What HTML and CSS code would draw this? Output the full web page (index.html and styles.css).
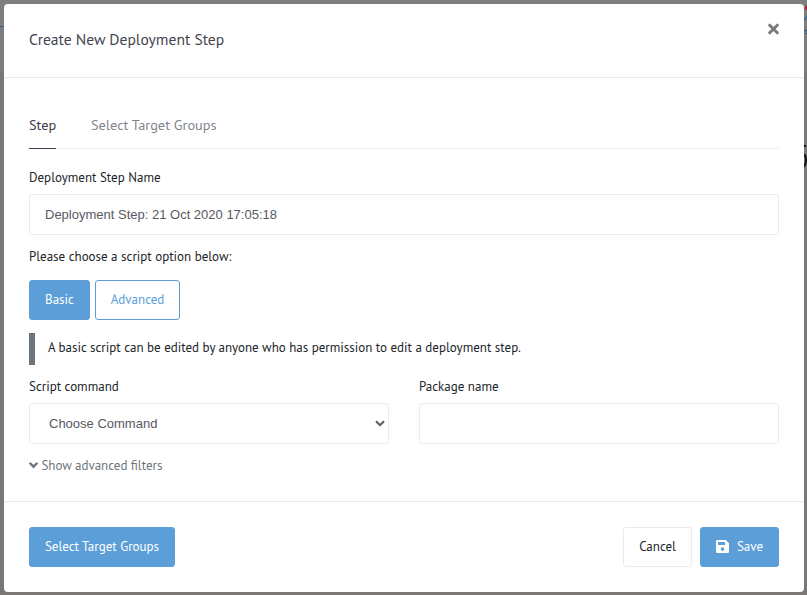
FILE: index.html
```html
<!DOCTYPE html>
<html lang="en">
<head>
<meta charset="utf-8">
<title>Create New Deployment Step</title>
<link rel="stylesheet" href="styles.css">
</head>
<body>
<svg class="backdrop" width="807" height="595" viewBox="0 0 807 595" aria-hidden="true">
  <path d="M0 71h807v524H0z" fill="#797877"/>
  <path d="M0 26.5h5" stroke="#315e91"/>
  <circle cx="807" cy="8" r="2.3" fill="#b51f42"/>
  <path d="M803 20q2 0 4-4M803 30.500h4M805 33.500h2" fill="none" stroke="#2e6590" stroke-width="1.300"/>
  <path d="M804 146h2M803 154q3 1 3 6t-3 7" fill="none" stroke="#111" stroke-width="2"/>
</svg>
<main class="modal">
  <header class="modal-header">
    <h1 class="title"><span>Create New Deployment Step</span></h1>
    <button class="close" type="button" aria-label="Close">
      <svg width="11" height="12" viewBox="0 0 11 12"><path d="M1.700 2.200l7.600 7.600M9.300 2.200l-7.600 7.600" stroke="#7b7b7b" stroke-width="3" stroke-linecap="round"/></svg>
    </button>
  </header>
  <section class="modal-body">
    <nav class="tabs">
      <a class="tab active">Step</a>
      <a class="tab groups">Select Target Groups</a>
    </nav>
    <label class="label name-label">Deployment Step Name</label>
    <div class="field">Deployment Step: 21 Oct 2020 17:05:18</div>
    <p class="label prompt">Please choose a script option below:</p>
    <div class="options">
      <button class="btn primary basic" type="button">Basic</button>
      <button class="btn outline" type="button">Advanced</button>
    </div>
    <div class="callout"><span>A basic script can be edited by anyone who has permission to edit a deployment step.</span></div>
    <div class="columns">
      <div>
        <label class="label command-label">Script command</label>
        <div class="field select">Choose Command
          <svg width="10" height="7" viewBox="0 0 10 7"><path d="M1 1.200l4 4 4-4" fill="none" stroke="#555762" stroke-width="2"/></svg>
        </div>
      </div>
      <div>
        <label class="label package-label">Package name</label>
        <div class="field"></div>
      </div>
    </div>
    <a class="filters">
      <svg width="9" height="7" viewBox="0 0 9 7"><path d="M1.300 1.500l3.200 3.200 3.200-3.200" fill="none" stroke="#6c757d" stroke-width="2.400" stroke-linecap="round"/></svg>
      <span>Show advanced filters</span>
    </a>
  </section>
  <footer class="modal-footer">
    <button class="btn primary next" type="button">Select Target Groups</button>
    <button class="btn cancel" type="button">Cancel</button>
    <button class="btn primary save" type="button">
      <svg width="13" height="13" viewBox="0 0 13 13"><path fill="#fff" fill-rule="evenodd" d="M1.300 0h8.500L13 3.200v8.500q0 1.300-1.300 1.300H1.300Q0 13 0 11.700V1.300Q0 0 1.300 0zM2 2v3h7V2zM6.500 7.300a1.800 1.800 0 1 0 0 3.600 1.800 1.800 0 0 0 0-3.600z"/></svg>
      <span>Save</span>
    </button>
  </footer>
</main>
</body>
</html>
```
FILE: styles.css
```css
* { box-sizing: border-box; }
body {
  margin: 0;
  width: 807px;
  height: 595px;
  padding: 4px 3px 3px 4px;
  overflow: hidden;
  background: #7e7e7e;
  font-family: "PT Sans", "Noto Sans", sans-serif;
  font-size: 13px;
  color: #212529;
}
.backdrop { position: absolute; top: 0; left: 0; z-index: -1; }
.modal {
  display: flex;
  flex-direction: column;
  width: 800px;
  height: 588px;
  background: #fff;
  border-radius: 4px;
}
.modal-header {
  display: flex;
  justify-content: space-between;
  align-items: flex-start;
  height: 74px;
  padding: 19px 25px 0;
  border-bottom: 1px solid #e9e9ec;
}
.title {
  margin: 4px 0 0;
  font-size: 15.6px;
  line-height: 24px;
  font-weight: 400;
  color: #43444e;
}
.close { display: flex; padding: 0; border: 0; background: none; }
.modal-body { height: 423px; padding: 25px 25px 0; }
.tabs {
  display: flex;
  gap: 35px;
  height: 46px;
  border-bottom: 1px solid #ebedf2;
}
.tab {
  height: 46px;
  padding-top: 12px;
  font-size: 14.3px;
  line-height: 20px;
  color: #83848f;
  white-space: nowrap;
}
.tab.active { width: 27px; color: #3b3c48; border-bottom: 1px solid #3d3e4d; }
.label { display: block; margin: 0; height: 20px; line-height: 22px; white-space: nowrap; }
.name-label { margin: 18px 0 7px; }
.field {
  height: 41px;
  padding: 0 15px;
  border: 1px solid #ebebf0;
  border-radius: 3px;
  font: 13px/39px "Liberation Sans", sans-serif;
  color: #575962;
}
.prompt { margin: 11px 0 14px; }
.options { display: flex; gap: 5px; }
.btn {
  display: flex;
  align-items: center;
  justify-content: center;
  height: 40px;
  padding: 0;
  border: 1px solid #5c9ed8;
  border-radius: 3px;
  background: #fff;
  font: inherit;
  line-height: 20px;
  color: #212529;
  white-space: nowrap;
}
.primary { background: #5c9ed8; color: #fff; }
.outline { width: 85px; color: #5c9ed8; }
.basic { width: 61px; }
.callout {
  height: 32px;
  margin: 13px 0 11px;
  padding-left: 13px;
  border-left: 6px solid #6c757d;
  line-height: 29px;
  white-space: nowrap;
}
.columns { display: grid; grid-template-columns: 1fr 1fr; gap: 30px; }
.columns .label { margin-bottom: 7px; }
.select { display: flex; align-items: center; justify-content: space-between; padding: 0 3px 0 19px; }
.filters { display: flex; align-items: center; gap: 3.4px; height: 20px; margin-top: 11px; color: #6c757d; }
.modal-footer {
  display: flex;
  height: 91px;
  padding: 25px 25px 0;
  border-top: 1px solid #e9e9ec;
}
.next { width: 146px; }
.cancel { width: 69px; margin-left: auto; border-color: #ebebef; }
.save { width: 79px; margin-left: 8px; gap: 8px; }
.save svg { margin-bottom: 1px; }
```
